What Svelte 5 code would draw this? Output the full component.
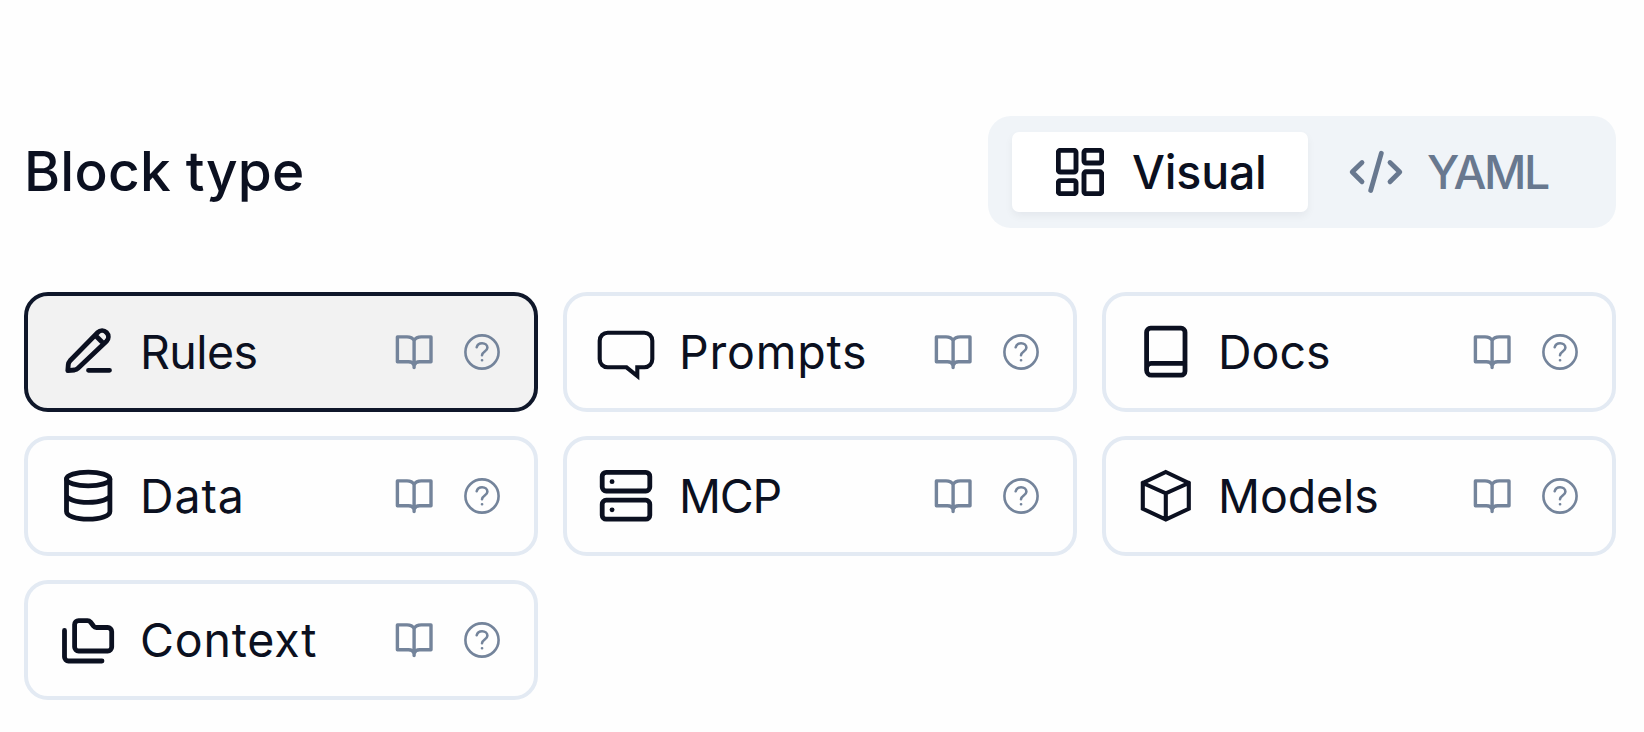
<script>
  const blocks = [
    { id: 'rules', label: 'Rules', spacing: -0.6 },
    { id: 'prompts', label: 'Prompts', spacing: 0.8 },
    { id: 'docs', label: 'Docs', spacing: 0 },
    { id: 'data', label: 'Data', spacing: 0.9 },
    { id: 'mcp', label: 'MCP', spacing: -1.2 },
    { id: 'models', label: 'Models', spacing: -0.1 },
    { id: 'context', label: 'Context', spacing: 0.8 }
  ];
  let selected = $state('rules');
</script>

<main>
  <header>
    <h1>Block type</h1>
    <div class="toggle">
      <button class="tab active">
        <svg width="48" height="48" viewBox="0 0 48 48" stroke-width="4.9">
          <rect x="2.3" y="2.3" width="17.7" height="21.7" rx="2" />
          <rect x="28" y="2.3" width="17.7" height="12.7" rx="2" />
          <rect x="28" y="23.8" width="17.7" height="21.9" rx="2" />
          <rect x="2.3" y="32.6" width="17.7" height="13.1" rx="2" />
        </svg>
        <span class="visual">Visual</span>
      </button>
      <button class="tab">
        <svg width="56" height="48" viewBox="0 0 56 48" stroke-width="4.8">
          <path d="M14 14.5 4.2 24 14 33.8M33.3 5.3 22.7 42.5M42 14.5 51.8 24 42 33.8" />
        </svg>
        <span class="yaml">YAML</span>
      </button>
    </div>
  </header>

  <section class="grid">
    {#each blocks as block (block.id)}
      <div class="card" class:selected={selected === block.id}>
        <svg width="60" height="60" viewBox="0 0 60 60" stroke-width="4.8">
          {#if block.id === 'rules'}
            <path d="M12 38.8 39.7 10.5a6.2 6.2 0 0 1 8.8 8.8L20 46.2Q18.5 47.6 16.5 48L9.8 48.6 10.3 42.5Q10.6 40.3 12 38.8ZM37.5 13.5 45.5 21.5M30.5 48.3H51.5" />
          {:else if block.id === 'prompts'}
            <path stroke-width="4.1" stroke-linejoin="miter" d="M10.7 10.7H47.3a8 8 0 0 1 8 8V37.3a8 8 0 0 1-8 8H40.3V54L29.5 45.3H10.7a8 8 0 0 1-8-8V18.7a8 8 0 0 1 8-8Z" />
          {:else if block.id === 'docs'}
            <path d="M14.6 6.2H45a4 4 0 0 1 4 4V49.2a4 4 0 0 1-4 4H15.6a5 5 0 0 1-5-5V10.2a4 4 0 0 1 4-4ZM10.6 46a4.5 4.5 0 0 1 4.5-4.6H49" />
          {:else if block.id === 'data'}
            <ellipse cx="30.2" cy="13" rx="21.7" ry="6.9" />
            <path d="M8.5 13V45.5C8.5 50 18 53.2 30.2 53.2S51.9 50 51.9 45.5V13M8.5 29C8.5 33 18 36.3 30.2 36.3S51.9 33 51.9 29" />
          {:else if block.id === 'mcp'}
            <rect x="5.2" y="6.4" width="47.6" height="18.6" rx="4" />
            <rect x="5.2" y="34.2" width="47.6" height="19" rx="4" />
            <path d="M15 15.7h.1M15 43.8h.1" />
          {:else if block.id === 'models'}
            <path stroke-width="4.1" stroke-linejoin="miter" d="M29.8 6 52.8 17V42.8L29.8 53.6 6.8 42.8V17ZM6.8 17 29.8 27.3 52.8 17M29.8 27.3V53" />
          {:else}
            <path d="M20.6 10.6H29.5a4 4 0 0 1 3 1.4L35.5 16a4 4 0 0 0 3 1.5H49.7a4 4 0 0 1 4 4V37a4 4 0 0 1-4 4H20.6a4 4 0 0 1-4-4V14.6a4 4 0 0 1 4-4ZM6.5 20.5V47a4 4 0 0 0 4 4H44" />
          {/if}
        </svg>
        <span class="label" style:letter-spacing="{block.spacing}px">{block.label}</span>
        <div class="actions">
          <svg width="40" height="36" viewBox="0 0 40 36" stroke-width="3.4">
            <path d="M20.1 33.5V6.5Q18 2.9 13 2.9H3.4V27.8H14.5Q19 27.8 20.1 31.5 21.2 27.8 25.7 27.8H37V2.9H27.2Q22.2 2.9 20.1 6.5" />
          </svg>
          <svg width="36" height="36" viewBox="0 0 36 36" stroke-width="2.6">
            <circle cx="18" cy="18" r="16.6" />
            <path d="M12.7 13.3C13.4 10.5 15.5 9.2 18.1 9.2 21 9.2 23.4 11.1 23.4 13.8 23.4 17.4 18 17.6 18 21.3M18 26.2h.1" />
          </svg>
        </div>
      </div>
    {/each}
  </section>
</main>

<style>
  :global(body) {
    background: #fefefe;
  }
  main {
    box-sizing: border-box;
    width: 1644px;
    height: 732px;
    padding: 116px 28px 0 24px;
    font-family: Inter, 'Liberation Sans', sans-serif;
    color: #0b1020;
  }
  header {
    display: flex;
    justify-content: space-between;
    align-items: center;
    height: 112px;
    margin-bottom: 64px;
  }
  h1 {
    margin: 0;
    padding-bottom: 2px;
    font-size: 55px;
    font-weight: 500;
    line-height: 110px;
    letter-spacing: 0.25px;
  }
  svg {
    display: block;
    flex: none;
    fill: none;
    stroke: currentColor;
    stroke-linecap: round;
    stroke-linejoin: round;
  }
  .toggle {
    box-sizing: border-box;
    display: flex;
    width: 628px;
    height: 112px;
    padding: 16px 24px;
    border-radius: 23px;
    background: #f0f4f8;
  }
  .tab {
    display: flex;
    align-items: center;
    flex: 1;
    padding: 0 0 0 40px;
    gap: 23px;
    border: 0;
    border-radius: 7px;
    background: none;
    color: #68788f;
    font: 500 46.5px Inter, 'Liberation Sans', sans-serif;
  }
  .tab span {
    padding-bottom: 1px;
  }
  .yaml {
    letter-spacing: -2.4px;
  }
  .tab.active {
    flex: 0 0 296px;
    box-sizing: border-box;
    padding-left: 44px;
    gap: 28px;
    background: #fff;
    color: #0b1020;
    box-shadow: 0 4px 8px rgba(15, 23, 42, 0.05);
  }
  .visual {
    letter-spacing: -0.2px;
  }
  .grid {
    display: grid;
    grid-template-columns: repeat(3, 514px);
    gap: 24px 25px;
  }
  .card {
    box-sizing: border-box;
    display: flex;
    align-items: center;
    height: 120px;
    padding: 0 34px 0 30px;
    border: 4px solid #e3eaf3;
    border-radius: 24px;
    background: #fefefe;
  }
  .card.selected {
    border-color: #0f172a;
    background: #f2f2f2;
  }
  .label {
    margin-left: 22px;
    padding-bottom: 1px;
    font-size: 46.5px;
    line-height: 60px;
    white-space: nowrap;
  }
  .actions {
    display: flex;
    gap: 30px;
    margin-left: auto;
    color: #74849b;
  }
</style>
